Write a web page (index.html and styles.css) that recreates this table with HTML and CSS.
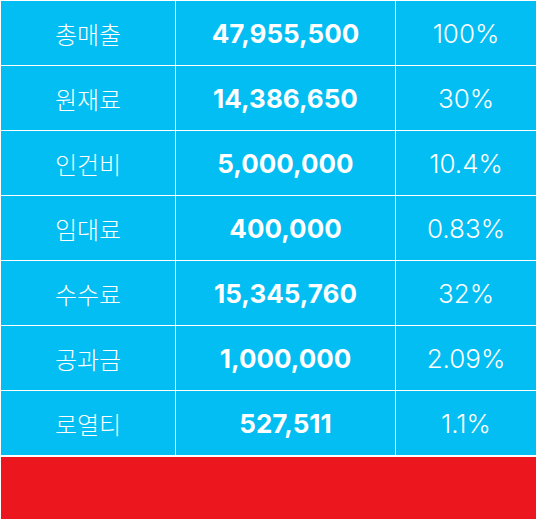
FILE: index.html
```html
<!DOCTYPE html>
<html lang="ko">
<head>
<meta charset="utf-8">
<link rel="stylesheet" href="styles.css">
</head>
<body>
<div class="sheet">
  <div class="cost-table">
    <div class="cell label">총매출</div><div class="cell amount">47,955,500</div><div class="cell pct">100%</div>
    <div class="cell label">원재료</div><div class="cell amount">14,386,650</div><div class="cell pct">30%</div>
    <div class="cell label">인건비</div><div class="cell amount">5,000,000</div><div class="cell pct">10.4%</div>
    <div class="cell label">임대료</div><div class="cell amount">400,000</div><div class="cell pct">0.83%</div>
    <div class="cell label">수수료</div><div class="cell amount">15,345,760</div><div class="cell pct">32%</div>
    <div class="cell label">공과금</div><div class="cell amount">1,000,000</div><div class="cell pct">2.09%</div>
    <div class="cell label">로열티</div><div class="cell amount">527,511</div><div class="cell pct">1.1%</div>
  </div>
  <div class="total-bar"></div>
</div>
</body>
</html>
```
FILE: styles.css
```css
html, body {
  margin: 0;
  padding: 0;
  background: #ffffff;
}
.sheet {
  width: 536px;
  height: 521px;
  display: flex;
  flex-direction: column;
}
.cost-table {
  display: grid;
  grid-template-columns: 174px 219px 140px;
  grid-auto-rows: 64px;
  gap: 1px;
  padding: 1px 0 0 1px;
  background: #ffffff;
}
.cell {
  background: #02bef2;
  color: #ffffff;
  display: flex;
  align-items: center;
  justify-content: center;
  font-family: Inter, "Noto Sans CJK KR", sans-serif;
  font-size: 26px;
}
.label {
  font-family: "Noto Sans CJK KR", sans-serif;
  font-size: 24px;
  font-weight: 300;
}
.amount {
  font-weight: 700;
}
.pct {
  font-weight: 300;
}
.total-bar {
  margin: 2px 0 0 1px;
  height: 62px;
  background: #ec161e;
}
```
